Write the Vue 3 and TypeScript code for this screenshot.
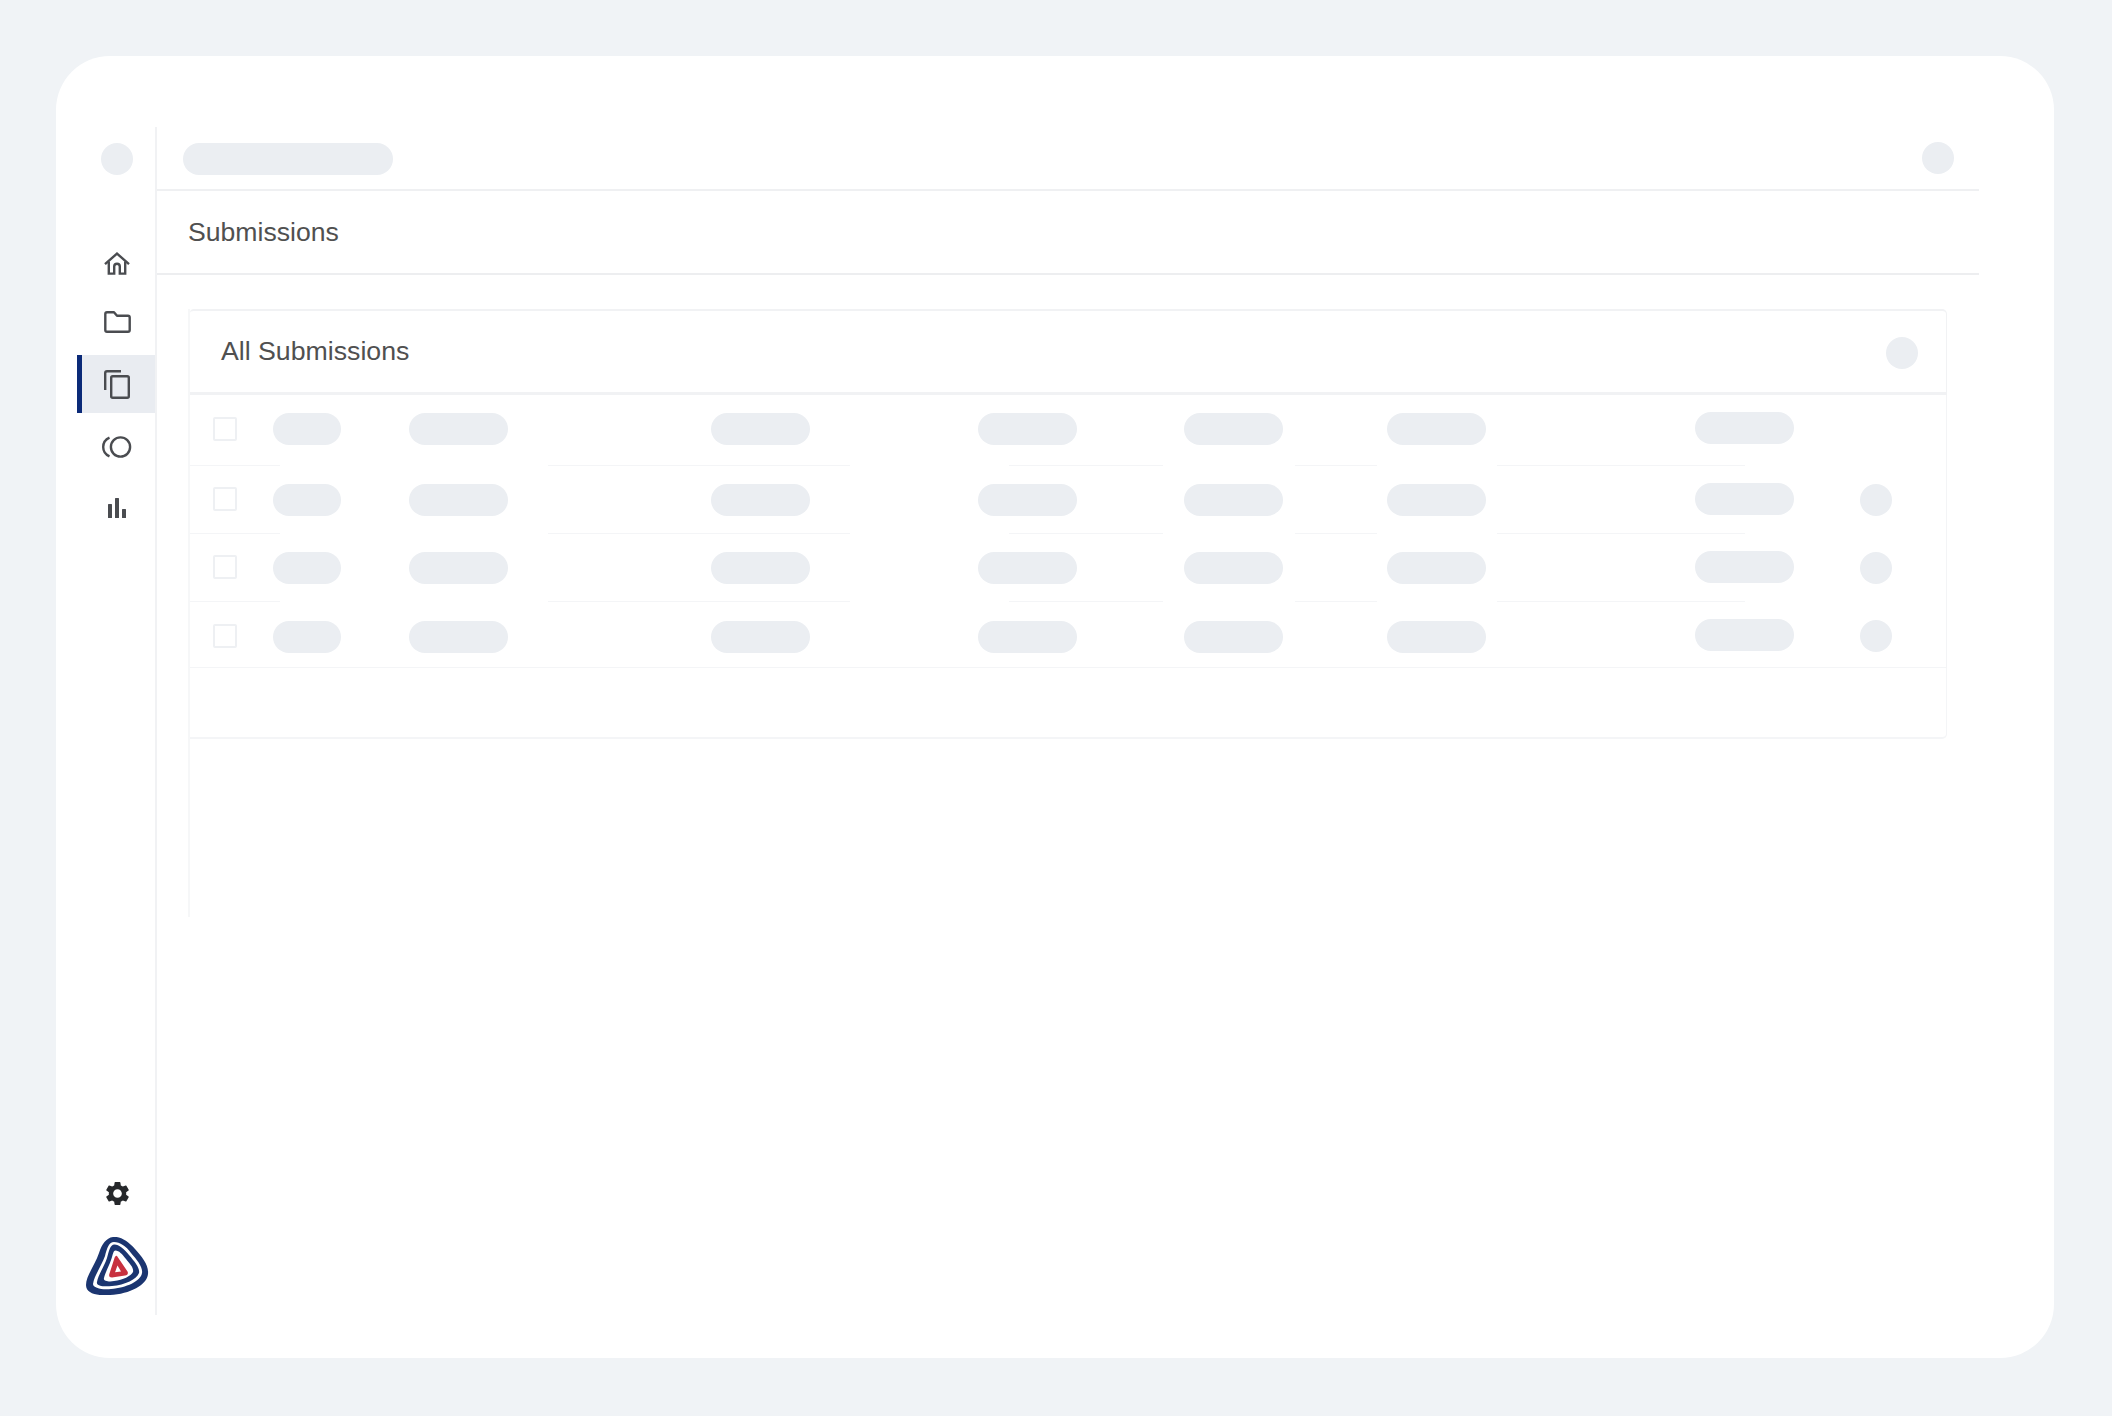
<template>
  <div class="page">
    <div class="shell">
      <aside class="sidebar">
        <span class="dot"></span>
        <nav class="nav">
          <a class="nav-item item-home">
            <svg width="26" height="23" viewBox="0 0 26 23" fill="none" stroke="#4a4c50" stroke-width="2.4">
              <path d="M1 12.2 13 1.6 25 12.2" />
              <path d="M4.8 9.6V21.6H10.2V14.6a2.8 2.8 0 0 1 5.6 0V21.6H21.2V9.6" />
            </svg>
          </a>
          <a class="nav-item">
            <svg width="27" height="22" viewBox="0 0 27 22" fill="none" stroke="#4a4c50" stroke-width="2.4" stroke-linejoin="round">
              <path d="M1.3 3c0-1 .7-1.700 1.700-1.700H10L13 4.800H24c1 0 1.700.7 1.700 1.700V19c0 1-.7 1.700-1.700 1.700H3C2 20.700 1.300 20 1.300 19Z" />
            </svg>
          </a>
          <a class="nav-item active">
            <svg width="26" height="29" viewBox="0 0 26 29" fill="none" stroke="#4a4c50" stroke-width="2.4">
              <path d="M1.200 20V3c0-1 .8-1.800 1.800-1.800H17" />
              <rect x="7.200" y="6.200" width="17.600" height="21.600" rx="1.500" />
            </svg>
          </a>
          <a class="nav-item item-ring">
            <svg width="30" height="22" viewBox="0 0 30 22" fill="none" stroke="#4a4c50" stroke-width="2.400">
              <circle cx="18.500" cy="11" r="9.600" />
              <path d="M7.500 1.600C3.500 3.400 1.200 7 1.200 11s2.300 7.600 6.300 9.400" />
            </svg>
          </a>
          <a class="nav-item item-bars">
            <svg width="18" height="20" viewBox="0 0 18 20" fill="#4a4c50">
              <rect x="0" y="6" width="4" height="14" rx="0.500" />
              <rect x="7" y="0" width="4" height="20" rx="0.500" />
              <rect x="14" y="11" width="4" height="9" rx="0.500" />
            </svg>
          </a>
        </nav>
        <div class="side-bottom">
          <svg class="gear" width="29" height="29" viewBox="0 0 24 24" fill="#26282b">
            <path d="M19.140 12.940c.04-.3.06-.61.06-.94 0-.32-.02-.64-.07-.94l2.030-1.580a.49.49 0 0 0 .12-.61l-1.920-3.320a.488.488 0 0 0-.59-.22l-2.390.96c-.5-.38-1.030-.7-1.620-.94l-.36-2.540a.484.484 0 0 0-.48-.41h-3.840c-.24 0-.43.17-.47.41l-.36 2.540c-.59.24-1.130.57-1.620.94l-2.390-.96c-.22-.08-.47 0-.59.22L2.740 8.870c-.12.21-.08.47.12.61l2.030 1.580c-.05.3-.09.63-.09.94s.02.64.07.94l-2.030 1.580a.49.49 0 0 0-.12.61l1.920 3.320c.12.22.37.29.59.22l2.390-.96c.5.38 1.030.7 1.620.94l.36 2.540c.05.24.24.41.48.41h3.840c.24 0 .44-.17.47-.41l.36-2.540c.59-.24 1.130-.56 1.620-.94l2.390.96c.22.08.47 0 .59-.22l1.920-3.320c.12-.22.07-.47-.12-.61l-2.010-1.580zM12 15.600c-1.980 0-3.600-1.620-3.600-3.600s1.620-3.600 3.600-3.600 3.600 1.620 3.600 3.600-1.620 3.600-3.600 3.600z" />
          </svg>
          <svg class="logo" width="63" height="58" viewBox="6 5 63 58">
            <path fill="#1b3570" d="M33 5C40 4 48 9 55 17 62 25 69 33 68 42 67 53 50 62 30 63 18 64 6 62 6 53 6 44 14 35 19 21 22 12 26 6 33 5Z" />
            <path fill="#fff" d="M34 10C40 10 46 14 51 21 57 28 63 35 62 41 61 49 46 56 31 57 22 58 13 56 13 52 14 44 21 35 25 24 27 16 29 10 34 10Z" />
            <path fill="#1b3570" d="M34.500 12.500C39 12.500 44 17 49 23 55 30 60 36 59 41 57 47 45 53 32 54 24 55 16 54 17 50 18 43 24 35 27 26 29 19 30 12.500 34.500 12.500Z" />
            <path fill="#fff" d="M35.500 18.500C39 18.500 42 22 46 27 50 32 54 36 53 40 51 44 43 48 34 49 29 50 23 49 24 46 25 41 29 34 31 28 33 23 33 18.500 35.500 18.500Z" />
            <path fill="#c8313f" d="M37 24 47.500 39.500C48.500 41.500 47.500 43.500 45 43.500L32 45.500C29.500 45.500 28.500 44 29.500 41.500L34.500 26C35 24.500 36.500 23.500 37 24Z" />
            <path fill="#fff" d="M37.500 33.500 41 39.500 35 40.300Z" />
          </svg>
        </div>
      </aside>

      <main class="main">
        <header class="topbar">
          <span class="pill pill-title"></span>
          <span class="dot"></span>
        </header>
        <div class="title-row">Submissions</div>
        <section class="content">
          <div class="panel">
            <div class="panel-head">
              <span class="panel-title">All Submissions</span>
              <span class="dot"></span>
            </div>
            <div v-for="(row, r) in rows" :key="r" class="row" :class="row.cls">
              <div class="cells">
                <span class="check"></span>
                <span class="pill short"></span>
                <span v-for="c in 5" :key="c" class="pill"></span>
                <span class="pill raised"></span>
                <span v-if="row.menu" class="dot"></span>
              </div>
              <div class="rule" :class="{ solid: r === rows.length - 1 }">
                <span
                  v-for="(s, i) in segments"
                  :key="i"
                  :style="{ width: s.width + 'px', marginLeft: s.gap + 'px' }"
                ></span>
              </div>
            </div>
            <div class="panel-foot"></div>
          </div>
        </section>
      </main>
    </div>
  </div>
</template>

<script setup lang="ts">
interface Row {
  cls: string
  menu: boolean
}

const rows: Row[] = [
  { cls: 'row-first', menu: false },
  { cls: '', menu: true },
  { cls: '', menu: true },
  { cls: 'row-last', menu: true }
]

// the row dividers are broken up, these are the visible bits
const segments = [
  { gap: 0, width: 90 },
  { gap: 268, width: 302 },
  { gap: 159, width: 154 },
  { gap: 132, width: 82 },
  { gap: 120, width: 248 }
]
</script>

<style>
html,
body {
  margin: 0;
  background: #f0f3f6;
}
</style>

<style scoped>
.page {
  width: 2112px;
  height: 1416px;
  box-sizing: border-box;
  padding: 56px 58px 58px 56px;
  background: #f0f3f6;
  font-family: "Liberation Sans", Arial, sans-serif;
}

.shell {
  display: flex;
  height: 100%;
  box-sizing: border-box;
  padding: 71px 75px 43px 21px;
  background: #fff;
  border-radius: 54px;
}

.sidebar {
  display: flex;
  flex-direction: column;
  align-items: center;
  width: 80px;
  box-sizing: border-box;
  padding: 16px 0 20px;
  border-right: 2px solid #f1f2f4;
}

.dot {
  flex: none;
  width: 32px;
  height: 32px;
  border-radius: 50%;
  background: #ebeef2;
}

.sidebar > .dot {
  margin-left: 2px;
}

.nav {
  display: flex;
  flex-direction: column;
  gap: 4px;
  width: 100%;
  margin-top: 59px;
}

.nav-item {
  display: flex;
  align-items: center;
  justify-content: center;
  height: 58px;
  box-sizing: border-box;
  padding-left: 2px;
}

.item-home {
  margin-bottom: -3px;
}

.item-ring {
  margin-top: 1px;
}

.item-bars {
  margin-top: -1px;
}

.active {
  background: #e9ecf1;
  border-left: 5px solid #0b2a78;
  padding: 0 3px 0 0;
}

.side-bottom {
  display: flex;
  flex-direction: column;
  align-items: center;
  margin-top: auto;
  margin-left: 2px;
}

.gear {
  margin-bottom: 29px;
}

.main {
  flex: 1;
  min-width: 0;
  display: flex;
  flex-direction: column;
}

.topbar {
  display: flex;
  align-items: center;
  justify-content: space-between;
  height: 64px;
  box-sizing: border-box;
  padding: 2px 25px 0 26px;
  border-bottom: 2px solid #eff0f2;
}

.topbar .dot {
  margin-bottom: 2px;
}

.pill {
  flex: none;
  width: 99px;
  height: 32px;
  border-radius: 16px;
  background: #ebeef2;
}

.pill-title {
  width: 210px;
}

.title-row {
  height: 84px;
  box-sizing: border-box;
  padding: 0 0 0 31px;
  border-bottom: 2px solid #edeef0;
  font-size: 26.6px;
  line-height: 82px;
  color: #505050;
}

.content {
  height: 642px;
  box-sizing: border-box;
  padding: 34px 32px 0;
}

.panel {
  height: 100%;
  margin-left: -1px;
  border-left: 2px solid #f6f7f8;
}

.panel-head {
  display: flex;
  align-items: center;
  justify-content: space-between;
  height: 86px;
  box-sizing: border-box;
  padding: 2px 28px 0 31px;
  border: solid #f1f2f4;
  border-width: 2px 1px 3px 0;
  border-top-right-radius: 5px;
  border-top-left-radius: 4px;
}

.panel-title {
  margin-top: -3px;
  font-size: 26.7px;
  color: #505050;
}

.row {
  border-right: 1px solid #f3f4f6;
}

.cells {
  display: grid;
  grid-template-columns: 59px 137px 302px 267px 206px 203px 308px 165px 32px;
  align-items: center;
  justify-items: start;
  height: 67px;
  box-sizing: border-box;
  padding-left: 23px;
}

.row-first .cells {
  height: 70px;
  padding-bottom: 2px;
}

.row-last .cells {
  height: 65px;
  padding-top: 5px;
}

.row-last .dot {
  transform: translateY(-1px);
}

.check {
  width: 24px;
  height: 24px;
  box-sizing: border-box;
  border: 2px solid #eef0f3;
  border-radius: 2px;
  transform: translateY(-1px);
}

.row-first .check {
  transform: none;
}

.pill.short {
  width: 68px;
  margin-left: 1px;
}

.pill.raised {
  transform: translateY(-1px);
}

.row-last .pill.raised {
  transform: translateY(-2px);
}

.rule {
  display: flex;
  height: 1px;
}

.rule span {
  background: #f4f5f7;
}

.rule.solid {
  background: #f4f5f7;
}

.panel-foot {
  height: 71px;
  box-sizing: border-box;
  border: solid #f4f5f7;
  border-width: 0 1px 2px 0;
  border-bottom-right-radius: 5px;
}
</style>
